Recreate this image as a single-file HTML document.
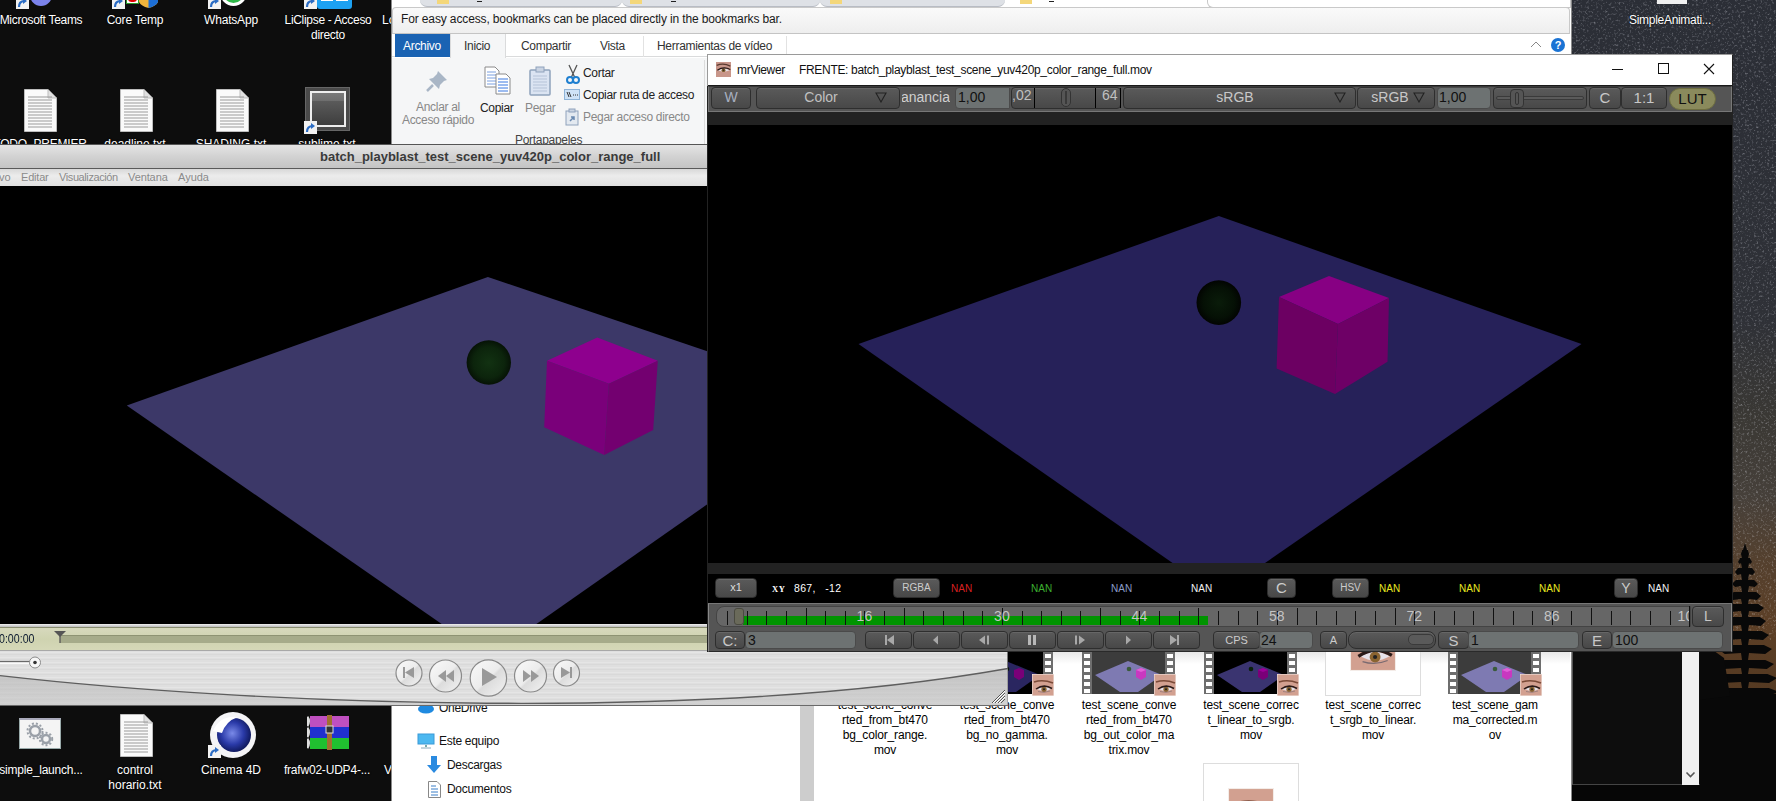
<!DOCTYPE html>
<html><head><meta charset="utf-8">
<style>
*{margin:0;padding:0;box-sizing:border-box}
html,body{width:1776px;height:801px;overflow:hidden;background:#0e0e0e}
body{position:relative;font-family:"Liberation Sans",sans-serif}
.a{position:absolute}
.dt{color:#fff;font-size:12px;text-align:center;line-height:15px;text-shadow:0 0 2px #000}
.rb{font-size:12px;color:#222;letter-spacing:-0.3px;white-space:nowrap}
.mb{position:absolute;border-radius:4px;background:linear-gradient(#5a5a5a,#484848);border:1px solid #2e2e2e;box-shadow:inset 0 1px 0 #666}
.mt{color:#c8c8c8;font-size:14px;text-align:center}
.inp{position:absolute;border-radius:4px;background:#6d7272;border:1px solid #4a4a4a;color:#111;font-size:14px}
.nan{position:absolute;font-size:10px;top:583px}
.tk{position:absolute;width:1px;background:#111}
</style></head><body>


<!-- desktop left icons -->
<div class="a" style="left:0;top:0;width:391px;height:801px;background:#0d0d0d"></div>
<svg class="a" style="left:16px;top:-4px" width="13" height="13" viewBox="0 0 13 13"><rect x="0" y="0" width="13" height="13" fill="#f2f2f2"/><path d="M3 11 Q3 5 9 5" stroke="#2b6cc4" stroke-width="2.2" fill="none"/><path d="M7 2 L11 5 L7 8 Z" fill="#2b6cc4"/></svg>
<div class="a" style="left:30px;top:-16px;width:22px;height:22px;border-radius:11px;background:#7b83eb"></div>
<svg class="a" style="left:112px;top:-4px" width="13" height="13" viewBox="0 0 13 13"><rect x="0" y="0" width="13" height="13" fill="#f2f2f2"/><path d="M3 11 Q3 5 9 5" stroke="#2b6cc4" stroke-width="2.2" fill="none"/><path d="M7 2 L11 5 L7 8 Z" fill="#2b6cc4"/></svg>
<div class="a" style="left:126px;top:-6px;width:13px;height:10px;background:#fff;border:1px solid #2a9a2a"></div>
<div class="a" style="left:128px;top:-5px;width:9px;height:7px;border-radius:4px;background:#e00000"></div>
<svg class="a" style="left:139px;top:0" width="19" height="8" viewBox="0 0 19 8"><path d="M0 0 H19 V2 Q17 6 9.5 8 Q2 6 0 2 Z" fill="#f0b43c"/><path d="M9.5 0 H19 V2 Q17 6 9.5 8 Z" fill="#1c6ed6"/></svg>
<svg class="a" style="left:208px;top:-4px" width="13" height="13" viewBox="0 0 13 13"><rect x="0" y="0" width="13" height="13" fill="#f2f2f2"/><path d="M3 11 Q3 5 9 5" stroke="#2b6cc4" stroke-width="2.2" fill="none"/><path d="M7 2 L11 5 L7 8 Z" fill="#2b6cc4"/></svg>
<div class="a" style="left:220px;top:-22px;width:27px;height:28px;border-radius:14px;border:3px solid #fff;background:#2fb84a"></div>
<svg class="a" style="left:304px;top:-4px" width="13" height="13" viewBox="0 0 13 13"><rect x="0" y="0" width="13" height="13" fill="#f2f2f2"/><path d="M3 11 Q3 5 9 5" stroke="#2b6cc4" stroke-width="2.2" fill="none"/><path d="M7 2 L11 5 L7 8 Z" fill="#2b6cc4"/></svg>
<div class="a" style="left:317px;top:-6px;width:35px;height:15px;border-radius:0 0 3px 3px;background:#1da1f2"></div>
<div class="a" style="left:321px;top:-2px;width:12px;height:3px;background:#fff"></div><div class="a" style="left:336px;top:-2px;width:12px;height:3px;background:#fff"></div>
<div class="a dt" style="left:-9px;top:13px;width:100px;letter-spacing:-0.3px">Microsoft Teams</div>
<div class="a dt" style="left:85px;top:13px;width:100px;letter-spacing:-0.2px">Core Temp</div>
<div class="a dt" style="left:181px;top:13px;width:100px;letter-spacing:-0.2px">WhatsApp</div>
<div class="a dt" style="left:273px;top:13px;width:110px;letter-spacing:-0.3px">LiClipse - Acceso<br>directo</div>
<div class="a dt" style="left:382px;top:13px">Lo</div>
<svg class="a" style="left:24px;top:89px" width="33" height="43" viewBox="0 0 33 43"><path d="M0.5 0.5 H24 L32.5 9 V42.5 H0.5 Z" fill="#fafafa" stroke="#bdbdbd"/><path d="M24 0.5 V9 H32.5" fill="#e0e0e0" stroke="#bdbdbd"/><path d="M4 8h24" stroke="#9a9a9a"/><path d="M4 11h24" stroke="#9a9a9a"/><path d="M4 14h24" stroke="#9a9a9a"/><path d="M4 17h24" stroke="#9a9a9a"/><path d="M4 20h24" stroke="#9a9a9a"/><path d="M4 23h24" stroke="#9a9a9a"/><path d="M4 26h24" stroke="#9a9a9a"/><path d="M4 29h24" stroke="#9a9a9a"/><path d="M4 32h24" stroke="#9a9a9a"/><path d="M4 35h24" stroke="#9a9a9a"/><path d="M4 38h24" stroke="#9a9a9a"/></svg><svg class="a" style="left:120px;top:89px" width="33" height="43" viewBox="0 0 33 43"><path d="M0.5 0.5 H24 L32.5 9 V42.5 H0.5 Z" fill="#fafafa" stroke="#bdbdbd"/><path d="M24 0.5 V9 H32.5" fill="#e0e0e0" stroke="#bdbdbd"/><path d="M4 8h24" stroke="#9a9a9a"/><path d="M4 11h24" stroke="#9a9a9a"/><path d="M4 14h24" stroke="#9a9a9a"/><path d="M4 17h24" stroke="#9a9a9a"/><path d="M4 20h24" stroke="#9a9a9a"/><path d="M4 23h24" stroke="#9a9a9a"/><path d="M4 26h24" stroke="#9a9a9a"/><path d="M4 29h24" stroke="#9a9a9a"/><path d="M4 32h24" stroke="#9a9a9a"/><path d="M4 35h24" stroke="#9a9a9a"/><path d="M4 38h24" stroke="#9a9a9a"/></svg><svg class="a" style="left:216px;top:89px" width="33" height="43" viewBox="0 0 33 43"><path d="M0.5 0.5 H24 L32.5 9 V42.5 H0.5 Z" fill="#fafafa" stroke="#bdbdbd"/><path d="M24 0.5 V9 H32.5" fill="#e0e0e0" stroke="#bdbdbd"/><path d="M4 8h24" stroke="#9a9a9a"/><path d="M4 11h24" stroke="#9a9a9a"/><path d="M4 14h24" stroke="#9a9a9a"/><path d="M4 17h24" stroke="#9a9a9a"/><path d="M4 20h24" stroke="#9a9a9a"/><path d="M4 23h24" stroke="#9a9a9a"/><path d="M4 26h24" stroke="#9a9a9a"/><path d="M4 29h24" stroke="#9a9a9a"/><path d="M4 32h24" stroke="#9a9a9a"/><path d="M4 35h24" stroke="#9a9a9a"/><path d="M4 38h24" stroke="#9a9a9a"/></svg>
<div class="a" style="left:305px;top:87px;width:45px;height:44px;background:#4a4a4a;border:1px solid #666"></div>
<div class="a" style="left:310px;top:91px;width:36px;height:36px;border:2px solid #eee;background:linear-gradient(#7a7a7a 0%,#6e6e6e 25%,#5a5a5a 26%,#3e3e3e 100%)"></div>
<svg class="a" style="left:304px;top:121px" width="13" height="13" viewBox="0 0 13 13"><rect x="0" y="0" width="13" height="13" fill="#f2f2f2"/><path d="M3 11 Q3 5 9 5" stroke="#2b6cc4" stroke-width="2.2" fill="none"/><path d="M7 2 L11 5 L7 8 Z" fill="#2b6cc4"/></svg>
<div class="a dt" style="left:-10px;top:137px;width:100px;letter-spacing:-0.2px">TODO_PREMIER</div>
<div class="a dt" style="left:85px;top:137px;width:100px">deadline.txt</div>
<div class="a dt" style="left:181px;top:137px;width:100px">SHADING.txt</div>
<div class="a dt" style="left:277px;top:137px;width:100px">sublime.txt</div>
<!-- bottom row -->
<div class="a" style="left:19px;top:718px;width:42px;height:31px;background:#f4f4f4;border:1px solid #9aa;border-top:2px solid #aab"></div>
<svg class="a" style="left:26px;top:722px" width="30" height="26" viewBox="0 0 30 26"><g fill="none" stroke="#9aa0a8" stroke-width="2.5"><circle cx="9" cy="9" r="5"/><circle cx="20" cy="17" r="4"/></g><g stroke="#9aa0a8" stroke-width="2" stroke-dasharray="2 2"><circle cx="9" cy="9" r="7.5" fill="none"/><circle cx="20" cy="17" r="6.2" fill="none"/></g></svg>
<svg class="a" style="left:120px;top:714px" width="33" height="43" viewBox="0 0 33 43"><path d="M0.5 0.5 H24 L32.5 9 V42.5 H0.5 Z" fill="#fafafa" stroke="#bdbdbd"/><path d="M24 0.5 V9 H32.5" fill="#e0e0e0" stroke="#bdbdbd"/><path d="M4 8h24" stroke="#9a9a9a"/><path d="M4 11h24" stroke="#9a9a9a"/><path d="M4 14h24" stroke="#9a9a9a"/><path d="M4 17h24" stroke="#9a9a9a"/><path d="M4 20h24" stroke="#9a9a9a"/><path d="M4 23h24" stroke="#9a9a9a"/><path d="M4 26h24" stroke="#9a9a9a"/><path d="M4 29h24" stroke="#9a9a9a"/><path d="M4 32h24" stroke="#9a9a9a"/><path d="M4 35h24" stroke="#9a9a9a"/><path d="M4 38h24" stroke="#9a9a9a"/></svg>
<svg class="a" style="left:208px;top:711px" width="48" height="48" viewBox="0 0 48 48"><defs><radialGradient id="c4" cx="45%" cy="45%" r="55%"><stop offset="0" stop-color="#7a8ae8"/><stop offset="0.6" stop-color="#2a3aa8"/><stop offset="1" stop-color="#101a60"/></radialGradient></defs><circle cx="25" cy="24" r="23" fill="#f4f4f6"/><circle cx="26" cy="24" r="17" fill="url(#c4)"/><path d="M5 20 Q12 4 30 6 Q18 10 14 22 Z" fill="#fff"/></svg>
<svg class="a" style="left:208px;top:745px" width="13" height="13" viewBox="0 0 13 13"><rect x="0" y="0" width="13" height="13" fill="#f2f2f2"/><path d="M3 11 Q3 5 9 5" stroke="#2b6cc4" stroke-width="2.2" fill="none"/><path d="M7 2 L11 5 L7 8 Z" fill="#2b6cc4"/></svg>
<svg class="a" style="left:307px;top:715px" width="43" height="35" viewBox="0 0 43 35"><rect x="3" y="1" width="39" height="11" fill="#c050c0"/><rect x="3" y="12" width="39" height="11" fill="#2030d0"/><rect x="3" y="23" width="39" height="11" fill="#20c030"/><path d="M0 2 Q3 6 0 11 M0 13 Q3 17 0 22 M0 24 Q3 28 0 33" stroke="#ddd" stroke-width="3" fill="none"/><rect x="20" y="0" width="5" height="35" fill="#a07030"/><rect x="19" y="11" width="7" height="7" fill="#333" stroke="#ddd"/></svg>
<div class="a dt" style="left:-9px;top:763px;width:100px;letter-spacing:-0.2px">simple_launch...</div>
<div class="a dt" style="left:85px;top:763px;width:100px">control<br>horario.txt</div>
<div class="a dt" style="left:181px;top:763px;width:100px">Cinema 4D</div>
<div class="a dt" style="left:272px;top:763px;width:110px;letter-spacing:-0.2px">frafw02-UDP4-...</div>
<div class="a dt" style="left:384px;top:763px">V</div>

<!-- desktop right side -->
<div class="a" style="left:1572px;top:0;width:204px;height:801px;background:linear-gradient(180deg,#2b2e36 0%,#2f3137 40%,#3a3834 52%,#46403a 62%,#54402e 70%,#5c3f26 78%,#553a22 86%,#1a120a 91%,#070707 100%)"></div>
<svg class="a" style="left:1572px;top:0" width="204" height="801"><filter id="nz" x="0" y="0" width="100%" height="100%"><feTurbulence type="fractalNoise" baseFrequency="0.45" numOctaves="2" seed="5"/><feColorMatrix type="matrix" values="0 0 0 0 0.85  0 0 0 0 0.87  0 0 0 0 0.95  0 0 0 2.4 -1.3"/></filter><rect width="204" height="640" filter="url(#nz)" opacity="0.4"/></svg>
<svg class="a" style="left:1690px;top:536px" width="86" height="265" viewBox="0 0 86 265"><polygon points="55.0,7.0 57.0,14.0 58.0,14.0 57.8,14.0 59.0,18.0 58.0,19.0 59.0,18.0 58.0,22.0 59.9,22.0 62.0,26.0 60.2,28.0 59.0,27.0 58.0,32.0 62.0,32.0 65.0,36.0 62.5,39.0 59.0,38.0 58.0,44.0 64.1,44.0 68.0,48.0 64.8,51.0 59.0,50.0 58.0,56.0 66.2,56.0 71.0,60.0 67.0,64.0 59.0,63.0 58.0,68.0 68.3,68.0 74.0,72.0 69.2,76.0 59.0,75.0 58.0,81.0 69.7,81.0 76.0,85.0 70.8,90.0 59.0,89.0 58.0,95.0 71.8,95.0 79.0,99.0 73.0,104.0 59.0,103.0 58.0,109.0 73.9,109.0 82.0,113.0 75.2,118.0 59.0,117.0 58.0,124.0 75.3,124.0 84.0,128.0 76.8,133.0 59.0,132.0 58.0,138.0 77.4,138.0 87.0,142.0 79.0,147.0 59.0,146.0 58.0,152.0 78.8,152.0 89.0,156.0 80.5,159.0 59.0,158.0 86.0,158.0 86.0,265.0 10.0,265.0 10.0,158.0 51.0,158.0 29.5,159.0 21.0,156.0 31.2,152.0 52.0,152.0 51.0,146.0 31.0,147.0 23.0,142.0 32.6,138.0 52.0,138.0 51.0,132.0 33.2,133.0 26.0,128.0 34.7,124.0 52.0,124.0 51.0,117.0 34.8,118.0 28.0,113.0 36.1,109.0 52.0,109.0 51.0,103.0 37.0,104.0 31.0,99.0 38.2,95.0 52.0,95.0 51.0,89.0 39.2,90.0 34.0,85.0 40.3,81.0 52.0,81.0 51.0,75.0 40.8,76.0 36.0,72.0 41.7,68.0 52.0,68.0 51.0,63.0 43.0,64.0 39.0,60.0 43.8,56.0 52.0,56.0 51.0,50.0 45.2,51.0 42.0,48.0 45.9,44.0 52.0,44.0 51.0,38.0 47.5,39.0 45.0,36.0 48.0,32.0 52.0,32.0 51.0,27.0 49.8,28.0 48.0,26.0 50.1,22.0 52.0,22.0 51.0,18.0 52.0,19.0 51.0,18.0 52.2,14.0 52.0,14.0 53.0,14.0" fill="#080808"/><polygon points="0,118 20,112 34,122 40,160 0,165" fill="#090909"/></svg>
<div class="a dt" style="left:1620px;top:13px;width:100px;letter-spacing:-0.3px">SimpleAnimati...</div>
<div class="a" style="left:1657px;top:0;width:30px;height:4px;background:#f0f0f0"></div>



<!-- Explorer window -->
<div class="a" style="left:391px;top:0;width:1181px;height:801px;background:#fff;border-left:1px solid #8a8a8a;border-right:1px solid #8a8a8a"></div>
<!-- top tab strip -->
<div class="a" style="left:392px;top:0;width:1179px;height:8px;background:#fff"></div>
<div class="a" style="left:420px;top:0;width:202px;height:7px;background:#dee1e6;border-radius:0 0 8px 8px;border-bottom:1px solid #b8bcc4"></div>
<div class="a" style="left:622px;top:0;width:198px;height:7px;background:#dee1e6;border-radius:0 0 8px 8px;border-bottom:1px solid #b8bcc4"></div>
<div class="a" style="left:820px;top:0;width:185px;height:7px;background:#dee1e6;border-radius:0 0 8px 8px;border-bottom:1px solid #b8bcc4"></div>
<div class="a" style="left:437px;top:0;width:12px;height:4px;background:#f4d77a"></div>
<div class="a" style="left:477px;top:1px;width:5px;height:1px;background:#222"></div><div class="a" style="left:671px;top:1px;width:5px;height:1px;background:#222"></div>
<div class="a" style="left:630px;top:0;width:12px;height:4px;background:#f4d77a"></div>
<div class="a" style="left:830px;top:0;width:12px;height:4px;background:#f4d77a"></div>
<div class="a" style="left:1020px;top:0;width:12px;height:4px;background:#f4d77a"></div>
<div class="a" style="left:1049px;top:1px;width:5px;height:1px;background:#222"></div>
<div class="a" style="left:1207px;top:0;width:364px;height:8px;border:1px solid #c8c8c8;border-top:none;border-radius:0 0 0 6px;background:#fff"></div>
<!-- bookmark popup -->
<div class="a" style="left:392px;top:7px;width:1178px;height:27px;background:linear-gradient(#fafafa,#eeeeee);border:1px solid #c9c9c9;border-bottom:1px solid #c4c4c4;border-radius:4px 4px 0 0"></div>
<div class="a rb" style="left:401px;top:12px;font-size:12px;color:#1a1a1a;letter-spacing:-0.13px">For easy access, bookmarks can be placed directly in the bookmarks bar.</div>
<!-- ribbon tabs -->
<div class="a" style="left:392px;top:34px;width:1178px;height:23px;background:#fff;border-bottom:1px solid #dadbdc"></div>
<div class="a" style="left:395px;top:34px;width:55px;height:23px;background:#1a63b3"></div>
<div class="a rb" style="left:403px;top:39px;color:#fff">Archivo</div>
<div class="a" style="left:450px;top:34px;width:56px;height:24px;background:#f5f6f7;border-left:1px solid #dadbdc;border-right:1px solid #dadbdc"></div>
<div class="a rb" style="left:464px;top:39px;color:#333">Inicio</div>
<div class="a rb" style="left:521px;top:39px;color:#333">Compartir</div>
<div class="a rb" style="left:600px;top:39px;color:#333">Vista</div>
<div class="a" style="left:643px;top:36px;width:1px;height:21px;background:#e2e2e2"></div>
<div class="a rb" style="left:657px;top:39px;color:#333">Herramientas de vídeo</div>
<div class="a" style="left:786px;top:36px;width:1px;height:21px;background:#e2e2e2"></div>
<!-- ribbon body -->
<div class="a" style="left:392px;top:58px;width:1178px;height:87px;background:#f5f6f7"></div>
<div class="a" style="left:704px;top:60px;width:1px;height:84px;background:#dcdcdc"></div>
<!-- ribbon icons -->
<svg class="a" style="left:424px;top:68px" width="26" height="26" viewBox="0 0 26 26"><path d="M14 3 L23 12 L20 13 L16 17 L15 21 L5 11 L9 10 L13 6 Z" fill="#a9b6c6"/><path d="M9 17 L3 23" stroke="#a9b6c6" stroke-width="2.5"/></svg>
<div class="a rb" style="left:397px;top:101px;width:82px;text-align:center;line-height:13px;color:#888">Anclar al<br>Acceso rápido</div>
<svg class="a" style="left:484px;top:66px" width="28" height="30" viewBox="0 0 28 30"><path d="M1 1 H11 L15 5 V21 H1 Z" fill="#fff" stroke="#8a8a8a"/><path d="M3 6h9M3 9h9M3 12h9M3 15h9M3 18h9" stroke="#7aa0e0"/><path d="M12 8 H22 L26 12 V28 H12 Z" fill="#fff" stroke="#8a8a8a"/><path d="M14 13h10M14 16h10M14 19h10M14 22h10M14 25h10" stroke="#3a78e0"/></svg>
<div class="a rb" style="left:480px;top:101px;color:#222">Copiar</div>
<svg class="a" style="left:528px;top:66px" width="24" height="30" viewBox="0 0 24 30"><rect x="2" y="4" width="20" height="25" rx="1" fill="#dbe4f2" stroke="#8fa2bc" stroke-width="1.5"/><rect x="8" y="1" width="8" height="5" fill="#c9d3e2" stroke="#8fa2bc"/><path d="M5 10h14M5 13h14M5 16h14M5 19h14M5 22h14M5 25h14" stroke="#b5c3d8"/></svg>
<div class="a rb" style="left:525px;top:101px;color:#888">Pegar</div>
<svg class="a" style="left:565px;top:64px" width="16" height="20" viewBox="0 0 16 20"><path d="M4 1 L10 14 M12 1 L6 14" stroke="#555" stroke-width="1.3"/><circle cx="5" cy="16" r="3" fill="none" stroke="#1e7fd0" stroke-width="2"/><circle cx="11" cy="16" r="3" fill="none" stroke="#1e7fd0" stroke-width="2"/></svg>
<div class="a rb" style="left:583px;top:66px;color:#222">Cortar</div>
<svg class="a" style="left:564px;top:89px" width="16" height="11" viewBox="0 0 16 11"><rect x="0.5" y="0.5" width="15" height="10" fill="#cfe3f7" stroke="#8fb4d8"/><path d="M3 3 L5 8 M5 3 L7 8 M9 6h1M11 6h1M13 6h1" stroke="#333"/></svg>
<div class="a rb" style="left:583px;top:88px;color:#222">Copiar ruta de acceso</div>
<svg class="a" style="left:565px;top:108px" width="14" height="18" viewBox="0 0 14 18"><rect x="1" y="3" width="12" height="14" fill="#e3e9f0" stroke="#8fa2bc"/><rect x="4" y="1" width="6" height="3" fill="#c9d3e2" stroke="#8fa2bc"/><path d="M5 13 L9 9 M6 9h3v3" stroke="#6a89b0" stroke-width="1.5" fill="none"/></svg>
<div class="a rb" style="left:583px;top:110px;color:#888">Pegar acceso directo</div>
<div class="a rb" style="left:515px;top:133px;color:#444">Portapapeles</div>
<!-- ribbon right controls -->
<svg class="a" style="left:1530px;top:40px" width="12" height="8" viewBox="0 0 12 8"><path d="M1 7 L6 2 L11 7" stroke="#888" fill="none"/></svg>
<div class="a" style="left:1551px;top:38px;width:14px;height:14px;border-radius:7px;background:#1a73d4;color:#fff;font-size:11px;font-weight:bold;text-align:center;line-height:14px">?</div>
<!-- nav pane -->
<div class="a" style="left:800px;top:700px;width:14px;height:101px;background:#cdcdcd"></div>
<svg class="a" style="left:418px;top:700px" width="16" height="14" viewBox="0 0 16 14"><ellipse cx="8" cy="9" rx="8" ry="4.5" fill="#1f8ae0"/><circle cx="6" cy="6" r="4" fill="#1f8ae0"/><circle cx="11" cy="7" r="3.5" fill="#1f8ae0"/></svg>
<div class="a rb" style="left:439px;top:701px;color:#111">OneDrive</div>
<svg class="a" style="left:417px;top:733px" width="18" height="16" viewBox="0 0 18 16"><rect x="1" y="1" width="16" height="10" fill="#4cb8f0" stroke="#3a9ad8"/><path d="M8 12h2v2H8z" fill="#7aa"/><path d="M4 15 H14" stroke="#8ab"/></svg>
<div class="a rb" style="left:439px;top:734px;color:#111">Este equipo</div>
<svg class="a" style="left:426px;top:756px" width="16" height="18" viewBox="0 0 16 18"><path d="M5 0 H11 V9 H15 L8 17 L1 9 H5 Z" fill="#2a8ae0"/></svg>
<div class="a rb" style="left:447px;top:758px;color:#111">Descargas</div>
<svg class="a" style="left:428px;top:781px" width="13" height="17" viewBox="0 0 13 17"><path d="M0.5 0.5 H9 L12.5 4 V16.5 H0.5 Z" fill="#fff" stroke="#888"/><path d="M3 5h5M3 8h7M3 11h7M3 14h7" stroke="#3a7ec8"/></svg>
<div class="a rb" style="left:447px;top:782px;color:#111">Documentos</div>



<!-- file area -->
<div class="a" style="left:814px;top:652px;width:756px;height:12px;background:linear-gradient(#e8e8e8,#fff)"></div>
<svg class="a" id="t2" style="left:970px;top:652px" width="73" height="42" viewBox="0 0 73 42" preserveAspectRatio="none"><rect width="73" height="42" fill="#000"/><polygon points="36,9 70,23 46,40 28,40 3,23" fill="#2a2660"/><circle cx="37" cy="17" r="2.3" fill="#0a1a0a"/><polygon points="44,18 49,16 54,18 54,25 49,28 44,25" fill="#7a0078"/></svg><div class="a" style="left:1043px;top:652px;width:10px;height:42px;background:#6e6e6e"></div><div class="a" style="left:1045px;top:654px;width:6px;height:4px;background:#fff"></div><div class="a" style="left:1045px;top:661px;width:6px;height:4px;background:#fff"></div><div class="a" style="left:1045px;top:668px;width:6px;height:4px;background:#fff"></div><div class="a" style="left:1045px;top:675px;width:6px;height:4px;background:#fff"></div><div class="a" style="left:1045px;top:682px;width:6px;height:4px;background:#fff"></div><div class="a" style="left:1045px;top:689px;width:6px;height:4px;background:#fff"></div><svg class="a" style="left:1032px;top:674px" width="22" height="22" viewBox="0 0 22 22" preserveAspectRatio="none"><rect width="22" height="22" fill="#d2a090" stroke="#f4ece8" stroke-width="1"/><path d="M2 8 Q11 5 21 9" stroke="#7a4a38" stroke-width="1.6" fill="none"/><path d="M5 15 Q12 10.5 19 15 Q12 19 5 15 Z" fill="#e6e2ea"/><circle cx="12" cy="15.3" r="2.6" fill="#8a6430"/><circle cx="12" cy="15.3" r="1" fill="#222"/><path d="M4 15 Q12 9.5 20 14.5" stroke="#2a1a18" stroke-width="1.5" fill="none"/><path d="M6 17.5 Q12 19.5 18 17" stroke="#7a6a70" stroke-width="0.6" fill="none"/></svg><div class="a" style="left:1082px;top:652px;width:10px;height:42px;background:#6e6e6e"></div><div class="a" style="left:1084px;top:654px;width:6px;height:4px;background:#fff"></div><div class="a" style="left:1084px;top:661px;width:6px;height:4px;background:#fff"></div><div class="a" style="left:1084px;top:668px;width:6px;height:4px;background:#fff"></div><div class="a" style="left:1084px;top:675px;width:6px;height:4px;background:#fff"></div><div class="a" style="left:1084px;top:682px;width:6px;height:4px;background:#fff"></div><div class="a" style="left:1084px;top:689px;width:6px;height:4px;background:#fff"></div><svg class="a" style="left:1092px;top:652px" width="73" height="42" viewBox="0 0 73 42" preserveAspectRatio="none"><rect width="73" height="42" fill="#3c3c3c"/><polygon points="36,9 70,23 46,40 28,40 3,23" fill="#7e7ab2"/><circle cx="37" cy="17" r="2.3" fill="#3a5a3a"/><polygon points="44,18 49,16 54,18 54,25 49,28 44,25" fill="#c838c0"/><polygon points="44,18 49,16 54,18 49,20" fill="#e060d8"/></svg><div class="a" style="left:1165px;top:652px;width:10px;height:42px;background:#6e6e6e"></div><div class="a" style="left:1167px;top:654px;width:6px;height:4px;background:#fff"></div><div class="a" style="left:1167px;top:661px;width:6px;height:4px;background:#fff"></div><div class="a" style="left:1167px;top:668px;width:6px;height:4px;background:#fff"></div><div class="a" style="left:1167px;top:675px;width:6px;height:4px;background:#fff"></div><div class="a" style="left:1167px;top:682px;width:6px;height:4px;background:#fff"></div><div class="a" style="left:1167px;top:689px;width:6px;height:4px;background:#fff"></div><svg class="a" style="left:1154px;top:674px" width="22" height="22" viewBox="0 0 22 22" preserveAspectRatio="none"><rect width="22" height="22" fill="#d2a090" stroke="#f4ece8" stroke-width="1"/><path d="M2 8 Q11 5 21 9" stroke="#7a4a38" stroke-width="1.6" fill="none"/><path d="M5 15 Q12 10.5 19 15 Q12 19 5 15 Z" fill="#e6e2ea"/><circle cx="12" cy="15.3" r="2.6" fill="#8a6430"/><circle cx="12" cy="15.3" r="1" fill="#222"/><path d="M4 15 Q12 9.5 20 14.5" stroke="#2a1a18" stroke-width="1.5" fill="none"/><path d="M6 17.5 Q12 19.5 18 17" stroke="#7a6a70" stroke-width="0.6" fill="none"/></svg><div class="a" style="left:1204px;top:652px;width:10px;height:42px;background:#6e6e6e"></div><div class="a" style="left:1206px;top:654px;width:6px;height:4px;background:#fff"></div><div class="a" style="left:1206px;top:661px;width:6px;height:4px;background:#fff"></div><div class="a" style="left:1206px;top:668px;width:6px;height:4px;background:#fff"></div><div class="a" style="left:1206px;top:675px;width:6px;height:4px;background:#fff"></div><div class="a" style="left:1206px;top:682px;width:6px;height:4px;background:#fff"></div><div class="a" style="left:1206px;top:689px;width:6px;height:4px;background:#fff"></div><svg class="a" style="left:1214px;top:652px" width="73" height="42" viewBox="0 0 73 42" preserveAspectRatio="none"><rect width="73" height="42" fill="#000"/><polygon points="36,9 70,23 46,40 28,40 3,23" fill="#3a3470"/><circle cx="37" cy="17" r="2.3" fill="#0a200a"/><polygon points="44,18 49,16 54,18 54,25 49,28 44,25" fill="#7a0078"/><polygon points="44,18 49,16 54,18 49,20" fill="#9a0098"/></svg><div class="a" style="left:1287px;top:652px;width:10px;height:42px;background:#6e6e6e"></div><div class="a" style="left:1289px;top:654px;width:6px;height:4px;background:#fff"></div><div class="a" style="left:1289px;top:661px;width:6px;height:4px;background:#fff"></div><div class="a" style="left:1289px;top:668px;width:6px;height:4px;background:#fff"></div><div class="a" style="left:1289px;top:675px;width:6px;height:4px;background:#fff"></div><div class="a" style="left:1289px;top:682px;width:6px;height:4px;background:#fff"></div><div class="a" style="left:1289px;top:689px;width:6px;height:4px;background:#fff"></div><svg class="a" style="left:1277px;top:674px" width="22" height="22" viewBox="0 0 22 22" preserveAspectRatio="none"><rect width="22" height="22" fill="#d2a090" stroke="#f4ece8" stroke-width="1"/><path d="M2 8 Q11 5 21 9" stroke="#7a4a38" stroke-width="1.6" fill="none"/><path d="M5 15 Q12 10.5 19 15 Q12 19 5 15 Z" fill="#e6e2ea"/><circle cx="12" cy="15.3" r="2.6" fill="#8a6430"/><circle cx="12" cy="15.3" r="1" fill="#222"/><path d="M4 15 Q12 9.5 20 14.5" stroke="#2a1a18" stroke-width="1.5" fill="none"/><path d="M6 17.5 Q12 19.5 18 17" stroke="#7a6a70" stroke-width="0.6" fill="none"/></svg><div class="a" style="left:1325px;top:648px;width:96px;height:48px;background:#fff;border:1px solid #ddd;border-top:none"></div><svg class="a" style="left:1350px;top:648px" width="46" height="23" viewBox="0 11 22 11" preserveAspectRatio="none"><rect width="22" height="22" fill="#d2a090" stroke="#f4ece8" stroke-width="1"/><path d="M2 8 Q11 5 21 9" stroke="#7a4a38" stroke-width="1.6" fill="none"/><path d="M5 15 Q12 10.5 19 15 Q12 19 5 15 Z" fill="#e6e2ea"/><circle cx="12" cy="15.3" r="2.6" fill="#8a6430"/><circle cx="12" cy="15.3" r="1" fill="#222"/><path d="M4 15 Q12 9.5 20 14.5" stroke="#2a1a18" stroke-width="1.5" fill="none"/><path d="M6 17.5 Q12 19.5 18 17" stroke="#7a6a70" stroke-width="0.6" fill="none"/></svg><div class="a" style="left:1448px;top:652px;width:10px;height:42px;background:#6e6e6e"></div><div class="a" style="left:1450px;top:654px;width:6px;height:4px;background:#fff"></div><div class="a" style="left:1450px;top:661px;width:6px;height:4px;background:#fff"></div><div class="a" style="left:1450px;top:668px;width:6px;height:4px;background:#fff"></div><div class="a" style="left:1450px;top:675px;width:6px;height:4px;background:#fff"></div><div class="a" style="left:1450px;top:682px;width:6px;height:4px;background:#fff"></div><div class="a" style="left:1450px;top:689px;width:6px;height:4px;background:#fff"></div><svg class="a" style="left:1458px;top:652px" width="73" height="42" viewBox="0 0 73 42" preserveAspectRatio="none"><rect width="73" height="42" fill="#3c3c3c"/><polygon points="36,9 70,23 46,40 28,40 3,23" fill="#7e7ab2"/><circle cx="37" cy="17" r="2.3" fill="#3a5a3a"/><polygon points="44,18 49,16 54,18 54,25 49,28 44,25" fill="#c838c0"/><polygon points="44,18 49,16 54,18 49,20" fill="#e060d8"/></svg><div class="a" style="left:1531px;top:652px;width:10px;height:42px;background:#6e6e6e"></div><div class="a" style="left:1533px;top:654px;width:6px;height:4px;background:#fff"></div><div class="a" style="left:1533px;top:661px;width:6px;height:4px;background:#fff"></div><div class="a" style="left:1533px;top:668px;width:6px;height:4px;background:#fff"></div><div class="a" style="left:1533px;top:675px;width:6px;height:4px;background:#fff"></div><div class="a" style="left:1533px;top:682px;width:6px;height:4px;background:#fff"></div><div class="a" style="left:1533px;top:689px;width:6px;height:4px;background:#fff"></div><svg class="a" style="left:1520px;top:674px" width="22" height="22" viewBox="0 0 22 22" preserveAspectRatio="none"><rect width="22" height="22" fill="#d2a090" stroke="#f4ece8" stroke-width="1"/><path d="M2 8 Q11 5 21 9" stroke="#7a4a38" stroke-width="1.6" fill="none"/><path d="M5 15 Q12 10.5 19 15 Q12 19 5 15 Z" fill="#e6e2ea"/><circle cx="12" cy="15.3" r="2.6" fill="#8a6430"/><circle cx="12" cy="15.3" r="1" fill="#222"/><path d="M4 15 Q12 9.5 20 14.5" stroke="#2a1a18" stroke-width="1.5" fill="none"/><path d="M6 17.5 Q12 19.5 18 17" stroke="#7a6a70" stroke-width="0.6" fill="none"/></svg><div class="a" style="left:1203px;top:763px;width:96px;height:40px;background:#fff;border:1px solid #ddd"></div><svg class="a" style="left:1228px;top:788px" width="46" height="23" viewBox="0 0 22 11" preserveAspectRatio="none"><rect width="22" height="22" fill="#d2a090" stroke="#f4ece8" stroke-width="1"/><path d="M2 8 Q11 5 21 9" stroke="#7a4a38" stroke-width="1.6" fill="none"/><path d="M5 15 Q12 10.5 19 15 Q12 19 5 15 Z" fill="#e6e2ea"/><circle cx="12" cy="15.3" r="2.6" fill="#8a6430"/><circle cx="12" cy="15.3" r="1" fill="#222"/><path d="M4 15 Q12 9.5 20 14.5" stroke="#2a1a18" stroke-width="1.5" fill="none"/><path d="M6 17.5 Q12 19.5 18 17" stroke="#7a6a70" stroke-width="0.6" fill="none"/></svg><div class="a" style="left:825px;top:698px;width:120px;text-align:center;font-size:12px;line-height:15px;color:#000;letter-spacing:-0.15px">test_scene_conve<br>rted_from_bt470<br>bg_color_range.<br>mov</div><div class="a" style="left:947px;top:698px;width:120px;text-align:center;font-size:12px;line-height:15px;color:#000;letter-spacing:-0.15px">test_scene_conve<br>rted_from_bt470<br>bg_no_gamma.<br>mov</div><div class="a" style="left:1069px;top:698px;width:120px;text-align:center;font-size:12px;line-height:15px;color:#000;letter-spacing:-0.15px">test_scene_conve<br>rted_from_bt470<br>bg_out_color_ma<br>trix.mov</div><div class="a" style="left:1191px;top:698px;width:120px;text-align:center;font-size:12px;line-height:15px;color:#000;letter-spacing:-0.15px">test_scene_correc<br>t_linear_to_srgb.<br>mov</div><div class="a" style="left:1313px;top:698px;width:120px;text-align:center;font-size:12px;line-height:15px;color:#000;letter-spacing:-0.15px">test_scene_correc<br>t_srgb_to_linear.<br>mov</div><div class="a" style="left:1435px;top:698px;width:120px;text-align:center;font-size:12px;line-height:15px;color:#000;letter-spacing:-0.15px">test_scene_gam<br>ma_corrected.m<br>ov</div><!-- dark preview pane -->
<div class="a" style="left:1572px;top:785px;width:128px;height:16px;background:#060606"></div>
<div class="a" style="left:1572px;top:650px;width:128px;height:135px;background:#0d0d0d;border-left:1px solid #555;border-bottom:1px solid #444"></div>
<div class="a" style="left:1682px;top:650px;width:17px;height:135px;background:#f0f0f0"></div><svg class="a" style="left:1685px;top:771px" width="11" height="8" viewBox="0 0 11 8"><path d="M1.5 1.5 L5.5 5.5 L9.5 1.5" stroke="#555" stroke-width="1.6" fill="none"/></svg>


<!-- Left player -->
<div class="a" style="left:0;top:144px;width:708px;height:1px;background:#555"></div>
<div class="a" style="left:0;top:145px;width:708px;height:23px;background:linear-gradient(#e4e4e4,#d2d2d2 50%,#c4c4c4)"></div>
<div class="a" style="left:0;top:168px;width:708px;height:1px;background:#5a5a5a"></div>
<div class="a" style="left:320px;top:149px;font-size:13px;font-weight:bold;color:#3a3a3a;white-space:nowrap;letter-spacing:0px">batch_playblast_test_scene_yuv420p_color_range_full</div>
<div class="a" style="left:0;top:169px;width:708px;height:17px;background:linear-gradient(#d8d8d8,#ececec 40%,#e0e0e0)"></div>
<div class="a" style="left:-1px;top:171px;font-size:11px;color:#8a8a8a;white-space:nowrap">vo</div><div class="a" style="left:21px;top:171px;font-size:11px;color:#8a8a8a;letter-spacing:-0.2px">Editar</div><div class="a" style="left:59px;top:171px;font-size:11px;color:#8a8a8a;letter-spacing:-0.4px">Visualización</div><div class="a" style="left:128px;top:171px;font-size:11px;color:#8a8a8a;letter-spacing:-0.1px">Ventana</div><div class="a" style="left:178px;top:171px;font-size:11px;color:#8a8a8a">Ayuda</div>
<div class="a" style="left:0;top:186px;width:708px;height:438px;background:#000;overflow:hidden">
<svg width="708" height="438" viewBox="0 186 708 438">
<polygon points="487.9,277 760,369.2 760,467.4 536.4,624 441.7,624 126.8,405.5" fill="#3c3868"/>
<defs><radialGradient id="sp1"><stop offset="0" stop-color="#123212"/><stop offset="0.7" stop-color="#0c240c"/><stop offset="1" stop-color="#061206"/></radialGradient></defs><circle cx="488.8" cy="362.5" r="22.2" fill="url(#sp1)"/>
<polygon points="547,360.7 597.3,337.6 657.8,360.7 608.9,383.8" fill="#8e008e"/>
<polygon points="547,360.7 608.9,383.8 604.2,454.9 544.2,427.2" fill="#7a007a"/>
<polygon points="608.9,383.8 657.8,360.7 653.2,429.9 604.2,454.9" fill="#730070"/>
</svg></div>
<div class="a" style="left:0;top:624px;width:708px;height:3px;background:linear-gradient(#f0f0f0,#bbb)"></div>
<div class="a" style="left:0;top:627px;width:708px;height:23px;background:linear-gradient(#d7d9bd,#cfd3b0 50%,#d5d8b8);border-top:1px solid #8a8e70"></div>
<div class="a" style="left:60px;top:635px;width:648px;height:8px;background:#a6ab8a;border-top:1px solid #8e9373"></div>
<svg class="a" style="left:53px;top:630px" width="14" height="13" viewBox="0 0 14 13"><path d="M1 1 H13 L7 7 Z" fill="#555"/><path d="M7 6 V13" stroke="#555" stroke-width="1.3"/></svg>
<div class="a" style="left:-1px;top:632px;font-size:12.5px;color:#0c1a30;white-space:nowrap;transform:scaleX(0.85);transform-origin:0 0">0:00:00</div>
<div class="a" style="left:0;top:650px;width:1008px;height:56px;background:repeating-linear-gradient(180deg,#dcdcdc 0px,#e8e8e8 2px,#d6d6d6 3px,#e2e2e2 5px);border-top:1px solid #a8a8a8;border-bottom:1px solid #6a6a6a;border-right:1px solid #777"></div>
<svg class="a" style="left:0;top:650px" width="1008" height="56" viewBox="0 650 1008 56">
<defs><linearGradient id="shd" x1="0" y1="0" x2="0" y2="1"><stop offset="0" stop-color="#b0b0b0"/><stop offset="1" stop-color="#c8c8c8"/></linearGradient></defs>
<path d="M0 675.6 C 257 704.9, 704.6 722.3, 1008 668.5 L1008 705 L0 705 Z" fill="url(#shd)" opacity="0.6"/>
<path d="M0 675.6 C 257 704.9, 704.6 722.3, 1008 668.5" stroke="#5e5e5e" stroke-width="1.4" fill="none"/>
<path d="M0 661.5 H30" stroke="#6a6a6a" stroke-width="1.2"/><path d="M0 663.5 H30" stroke="#fafafa" stroke-width="1.6"/>
<circle cx="35" cy="662.5" r="5.5" fill="#f6f6f6" stroke="#8a8a8a"/><circle cx="35" cy="662.5" r="1.8" fill="#333"/>
<defs><linearGradient id="bg1" x1="0" y1="0" x2="1" y2="1"><stop offset="0" stop-color="#fafafa"/><stop offset="0.5" stop-color="#ececec"/><stop offset="0.55" stop-color="#dcdcdc"/><stop offset="1" stop-color="#f4f4f4"/></linearGradient></defs><g fill="url(#bg1)" stroke="#8a8a8a" stroke-width="1.2">
<circle cx="409" cy="673" r="13"/><circle cx="445.5" cy="676" r="16"/><circle cx="488.4" cy="678" r="18.2"/><circle cx="530.5" cy="676" r="16"/><circle cx="566.5" cy="673" r="13"/>
</g>
<g fill="#999">
<rect x="403" y="667" width="2" height="11"/><path d="M405 672.5 L414 667 V678 Z"/>
<path d="M438 676 L446 670 V682 Z"/><path d="M446 676 L454 670 V682 Z"/>
<path d="M482 668 L497 677 L482 686 Z"/>
<path d="M523 670 L531 676 L523 682 Z"/><path d="M531 670 L539 676 L531 682 Z"/>
<path d="M561 667 L570 672.5 L561 678 Z"/><rect x="570" y="667" width="2" height="11"/>
</g>
<g stroke="#555" stroke-width="1"><path d="M992 703 L1005 690"/><path d="M995 703 L1005 693"/><path d="M998 703 L1005 696"/><path d="M1001 703 L1005 699"/></g>
<g stroke="#fff" stroke-width="1"><path d="M993 703 L1005 691"/><path d="M996 703 L1005 694"/><path d="M999 703 L1005 697"/></g>
</svg>



<!-- mrViewer -->
<div class="a" style="left:707px;top:54px;width:1026px;height:598px;background:#000;border:1px solid #222;border-top-color:#9a9a9a"></div><div class="a" style="left:707px;top:54px;width:1px;height:32px;background:#9a9a9a"></div>
<div class="a" style="left:708px;top:55px;width:1024px;height:30px;background:#fff"></div>
<svg class="a" style="left:716px;top:62px" width="15" height="15" viewBox="0 0 22 22" preserveAspectRatio="none"><rect width="22" height="22" fill="#c8968a"/><path d="M1 5 Q11 1 21 6" stroke="#5a3a30" stroke-width="1.8" fill="none"/><path d="M3 12 Q11 7 20 12 Q11 16 3 12 Z" fill="#e8e4ea"/><circle cx="11" cy="12" r="2.8" fill="#7a5a28"/><circle cx="11" cy="12" r="1" fill="#222"/><path d="M2 12 Q11 6 21 11" stroke="#221414" stroke-width="1.8" fill="none"/></svg>
<div class="a" style="left:737px;top:63px;font-size:12px;color:#111;white-space:nowrap;letter-spacing:-0.3px">mrViewer</div><div class="a" style="left:799px;top:63px;font-size:12px;color:#111;white-space:nowrap;letter-spacing:-0.32px">FRENTE: batch_playblast_test_scene_yuv420p_color_range_full.mov</div>
<svg class="a" style="left:1610px;top:62px" width="110" height="14" viewBox="0 0 110 14"><path d="M2 7.5 H13" stroke="#111"/><rect x="48.5" y="1.5" width="10" height="10" fill="none" stroke="#111"/><path d="M94 2 L104 12 M104 2 L94 12" stroke="#111" stroke-width="1.1"/></svg>
<!-- toolbar -->
<div class="a" style="left:708px;top:85px;width:1024px;height:1px;background:#1a1a1a"></div>
<div class="a" style="left:708px;top:86px;width:1024px;height:26px;background:#555;border:1px solid #777;border-top:1px solid #3a3a3a"></div>
<div class="a" style="left:708px;top:112px;width:1024px;height:13px;background:#222"></div>
<div class="mb" style="left:711px;top:87px;width:40px;height:22px"></div><div class="a mt" style="left:711px;top:89px;width:40px;color:#a8b0c0">W</div>
<div class="mb" style="left:756px;top:87px;width:144px;height:22px"></div><div class="a mt" style="left:790px;top:89px;width:62px;color:#c0c0c0">Color</div>
<svg class="a" style="left:875px;top:92px" width="12" height="11" viewBox="0 0 12 11"><path d="M1 1 H11 L6 10 Z" fill="none" stroke="#222" stroke-width="1.1"/></svg>
<div class="a" style="left:902px;top:89px;width:48px;overflow:hidden;white-space:nowrap;font-size:14px;color:#d0d0d0;direction:rtl">Ganancia</div>
<div class="inp" style="left:955px;top:87px;width:55px;height:22px;border-radius:4px 0 0 4px"></div><div class="a" style="left:958px;top:89px;font-size:14px;color:#111">1,00</div>
<div class="mb" style="left:1011px;top:87px;width:110px;height:22px"></div>
<div class="a" style="left:1012px;top:87px;font-size:14px;color:#c0c0c0">,02</div>
<div class="tk" style="left:1034px;top:88px;height:20px;background:#000"></div>
<div class="a" style="left:1061px;top:88px;width:10px;height:19px;border:1px solid #333;border-radius:5px;background:#555"></div>
<div class="a" style="left:1065px;top:91px;width:2px;height:13px;border:1px solid #3a3a3a"></div>
<div class="tk" style="left:1095px;top:88px;height:20px;background:#000"></div>
<div class="a" style="left:1102px;top:87px;font-size:14px;color:#c0c0c0">64</div>
<div class="tk" style="left:1120px;top:88px;height:20px;background:#000"></div>
<div class="mb" style="left:1123px;top:87px;width:233px;height:22px"></div><div class="a mt" style="left:1200px;top:89px;width:70px">sRGB</div>
<svg class="a" style="left:1334px;top:92px" width="12" height="11" viewBox="0 0 12 11"><path d="M1 1 H11 L6 10 Z" fill="none" stroke="#222" stroke-width="1.1"/></svg>
<div class="mb" style="left:1357px;top:87px;width:78px;height:22px"></div><div class="a mt" style="left:1370px;top:89px;width:40px">sRGB</div>
<svg class="a" style="left:1413px;top:92px" width="12" height="11" viewBox="0 0 12 11"><path d="M1 1 H11 L6 10 Z" fill="none" stroke="#222" stroke-width="1.1"/></svg>
<div class="inp" style="left:1437px;top:87px;width:54px;height:22px"></div><div class="a" style="left:1439px;top:89px;font-size:14px;color:#111">1,00</div>
<div class="mb" style="left:1493px;top:87px;width:94px;height:22px"></div>
<div class="a" style="left:1496px;top:96px;width:88px;height:4px;border:1px solid #3a3a3a;border-radius:2px;background:#5a5a5a"></div>
<div class="a" style="left:1510px;top:89px;width:14px;height:19px;border:1px solid #333;border-radius:4px;background:#555"></div>
<div class="a" style="left:1515px;top:92px;width:4px;height:13px;border:1px solid #333;border-radius:2px"></div>
<div class="mb" style="left:1589px;top:87px;width:32px;height:22px"></div><div class="a mt" style="left:1589px;top:89px;width:32px;font-size:15px">C</div>
<div class="mb" style="left:1621px;top:87px;width:46px;height:22px"></div><div class="a mt" style="left:1621px;top:89px;width:46px;font-size:15px">1:1</div>
<div class="a" style="left:1669px;top:88px;width:47px;height:22px;border-radius:11px;background:#8a8a5c;border:1px solid #6e6e40"></div><div class="a" style="left:1669px;top:90px;width:47px;text-align:center;font-size:15px;color:#111">LUT</div>
<!-- view -->
<svg class="a" style="left:708px;top:125px" width="1024" height="438" viewBox="708 125 1024 438">
<polygon points="1218.8,216 1581.5,344 1265,563 1172.6,563 858.5,344" fill="#262159"/>
<defs><radialGradient id="sp2"><stop offset="0" stop-color="#0a1c0a"/><stop offset="0.7" stop-color="#051005"/><stop offset="1" stop-color="#020402"/></radialGradient></defs><circle cx="1218.8" cy="302.6" r="22.3" fill="url(#sp2)"/>
<polygon points="1279,297 1329,276 1389,298 1338,324" fill="#870083"/>
<polygon points="1279,297 1338,324 1335,394 1276.6,368.6" fill="#6c0062"/>
<polygon points="1338,324 1389,298 1387.5,361.7 1335,394" fill="#6e0066"/>
</svg>
<div class="a" style="left:708px;top:563px;width:1024px;height:11px;background:#222"></div>
<!-- info bar -->
<div class="mb" style="left:715px;top:578px;width:42px;height:20px"></div><div class="a" style="left:715px;top:581px;width:42px;text-align:center;font-size:11px;color:#ddd">x1</div>
<div class="a" style="left:772px;top:584px;font-size:8.5px;color:#fff;font-family:'Liberation Serif',serif;font-weight:bold;letter-spacing:0.6px">XY</div>
<div class="a" style="left:794px;top:582px;font-size:10.5px;color:#fff;white-space:nowrap;letter-spacing:0.3px">867,&nbsp;&nbsp; -12</div>
<div class="mb" style="left:893px;top:578px;width:47px;height:20px"></div><div class="a" style="left:893px;top:582px;width:47px;text-align:center;font-size:10px;color:#ccc">RGBA</div>
<div class="nan" style="left:951px;color:#d82020">NAN</div>
<div class="nan" style="left:1031px;color:#3cb030">NAN</div>
<div class="nan" style="left:1111px;color:#8a9cc8">NAN</div>
<div class="nan" style="left:1191px;color:#f0f0f0">NAN</div>
<div class="mb" style="left:1267px;top:578px;width:29px;height:20px"></div><div class="a" style="left:1267px;top:579px;width:29px;text-align:center;font-size:15px;color:#ccc">C</div>
<div class="mb" style="left:1332px;top:578px;width:37px;height:20px"></div><div class="a" style="left:1332px;top:582px;width:37px;text-align:center;font-size:10px;color:#ccc">HSV</div>
<div class="nan" style="left:1379px;color:#e8e820">NAN</div>
<div class="nan" style="left:1459px;color:#e8e820">NAN</div>
<div class="nan" style="left:1539px;color:#e8e820">NAN</div>
<div class="mb" style="left:1614px;top:578px;width:24px;height:20px"></div><div class="a" style="left:1614px;top:580px;width:24px;text-align:center;font-size:14px;color:#ccc">Y</div>
<div class="nan" style="left:1648px;color:#f0f0f0">NAN</div>
<!-- timeline panel -->
<div class="a" style="left:708px;top:603px;width:1024px;height:49px;background:#555;border:1px solid #888;border-top:1px solid #777;border-bottom:1px solid #2a2a2a"></div>
<div class="a" style="left:716px;top:606px;width:975px;height:21px;background:#666;border:1px solid #444;border-radius:8px 0 0 8px"></div>
<div class="a" style="left:743px;top:616px;width:465px;height:9px;background:#009400"></div>
<div class="tk" style="left:726.9px;top:611px;height:14px"></div>
<div class="tk" style="left:746.6px;top:611px;height:14px"></div>
<div class="tk" style="left:766.2px;top:611px;height:14px"></div>
<div class="tk" style="left:785.8px;top:611px;height:14px"></div>
<div class="tk" style="left:805.5px;top:608px;height:17px"></div>
<div class="tk" style="left:825.1px;top:611px;height:14px"></div>
<div class="tk" style="left:844.8px;top:611px;height:14px"></div>
<div class="tk" style="left:864.4px;top:611px;height:14px"></div>
<div class="tk" style="left:884.0px;top:611px;height:14px"></div>
<div class="tk" style="left:903.7px;top:608px;height:17px"></div>
<div class="tk" style="left:923.3px;top:611px;height:14px"></div>
<div class="tk" style="left:943.0px;top:611px;height:14px"></div>
<div class="tk" style="left:962.6px;top:611px;height:14px"></div>
<div class="tk" style="left:982.2px;top:611px;height:14px"></div>
<div class="tk" style="left:1001.9px;top:608px;height:17px"></div>
<div class="tk" style="left:1021.5px;top:611px;height:14px"></div>
<div class="tk" style="left:1041.2px;top:611px;height:14px"></div>
<div class="tk" style="left:1060.8px;top:611px;height:14px"></div>
<div class="tk" style="left:1080.4px;top:611px;height:14px"></div>
<div class="tk" style="left:1100.1px;top:608px;height:17px"></div>
<div class="tk" style="left:1119.7px;top:611px;height:14px"></div>
<div class="tk" style="left:1139.4px;top:611px;height:14px"></div>
<div class="tk" style="left:1159.0px;top:611px;height:14px"></div>
<div class="tk" style="left:1178.6px;top:611px;height:14px"></div>
<div class="tk" style="left:1198.3px;top:608px;height:17px"></div>
<div class="tk" style="left:1217.9px;top:611px;height:14px"></div>
<div class="tk" style="left:1237.6px;top:611px;height:14px"></div>
<div class="tk" style="left:1257.2px;top:611px;height:14px"></div>
<div class="tk" style="left:1276.8px;top:611px;height:14px"></div>
<div class="tk" style="left:1296.5px;top:608px;height:17px"></div>
<div class="tk" style="left:1316.1px;top:611px;height:14px"></div>
<div class="tk" style="left:1335.8px;top:611px;height:14px"></div>
<div class="tk" style="left:1355.4px;top:611px;height:14px"></div>
<div class="tk" style="left:1375.0px;top:611px;height:14px"></div>
<div class="tk" style="left:1394.7px;top:608px;height:17px"></div>
<div class="tk" style="left:1414.3px;top:611px;height:14px"></div>
<div class="tk" style="left:1434.0px;top:611px;height:14px"></div>
<div class="tk" style="left:1453.6px;top:611px;height:14px"></div>
<div class="tk" style="left:1473.2px;top:611px;height:14px"></div>
<div class="tk" style="left:1492.9px;top:608px;height:17px"></div>
<div class="tk" style="left:1512.5px;top:611px;height:14px"></div>
<div class="tk" style="left:1532.2px;top:611px;height:14px"></div>
<div class="tk" style="left:1551.8px;top:611px;height:14px"></div>
<div class="tk" style="left:1571.4px;top:611px;height:14px"></div>
<div class="tk" style="left:1591.1px;top:608px;height:17px"></div>
<div class="tk" style="left:1610.7px;top:611px;height:14px"></div>
<div class="tk" style="left:1630.4px;top:611px;height:14px"></div>
<div class="tk" style="left:1650.0px;top:611px;height:14px"></div>
<div class="tk" style="left:1669.6px;top:611px;height:14px"></div>
<div class="a" style="left:716px;top:606px;width:974px;height:21px;overflow:hidden"><div class="a" style="left:128.4px;top:2px;width:40px;text-align:center;font-size:14px;color:#c4c4c4">16</div><div class="a" style="left:265.9px;top:2px;width:40px;text-align:center;font-size:14px;color:#c4c4c4">30</div><div class="a" style="left:403.4px;top:2px;width:40px;text-align:center;font-size:14px;color:#c4c4c4">44</div><div class="a" style="left:540.8px;top:2px;width:40px;text-align:center;font-size:14px;color:#c4c4c4">58</div><div class="a" style="left:678.3px;top:2px;width:40px;text-align:center;font-size:14px;color:#c4c4c4">72</div><div class="a" style="left:815.8px;top:2px;width:40px;text-align:center;font-size:14px;color:#c4c4c4">86</div><div class="a" style="left:953.3px;top:2px;width:40px;text-align:center;font-size:14px;color:#c4c4c4">100</div></div>
<div class="a" style="left:734px;top:608px;width:10px;height:17px;background:#6a6a5a;border:1px solid #4a4a40;border-radius:3px"></div>
<div class="mb" style="left:1692px;top:606px;width:32px;height:21px"></div><div class="a mt" style="left:1692px;top:608px;width:32px">L</div>
<div class="a" style="left:1689px;top:606px;width:1px;height:21px;background:#111"></div>
<div class="mb" style="left:715px;top:631px;width:30px;height:18px"></div><div class="a mt" style="left:715px;top:632px;width:30px;font-size:15px">C:</div>
<div class="inp" style="left:745px;top:631px;width:111px;height:18px"></div><div class="a" style="left:748px;top:632px;font-size:14px;color:#111">3</div>
<div class="mb" style="left:864.5px;top:631px;width:47px;height:18px"></div><svg class="a" style="left:879.0px;top:631px" width="18" height="18" viewBox="0 0 18 18"><g fill="#a8a8a8"><rect x="6" y="4" width="2" height="10"/><path d="M8 9 L15 4 V14 Z"/></g></svg>
<div class="mb" style="left:912.5px;top:631px;width:47px;height:18px"></div><svg class="a" style="left:927.0px;top:631px" width="18" height="18" viewBox="0 0 18 18"><g fill="#a8a8a8"><path d="M6 9 L11 4.5 V13.5 Z"/></g></svg>
<div class="mb" style="left:960.5px;top:631px;width:47px;height:18px"></div><svg class="a" style="left:975.0px;top:631px" width="18" height="18" viewBox="0 0 18 18"><g fill="#a8a8a8"><path d="M4 9 L10 4.5 V13.5 Z"/><rect x="12" y="4.5" width="2" height="9"/></g></svg>
<div class="mb" style="left:1008.5px;top:631px;width:47px;height:18px"></div><svg class="a" style="left:1023.0px;top:631px" width="18" height="18" viewBox="0 0 18 18"><g fill="#b8b8b8"><rect x="5" y="4" width="3" height="10"/><rect x="10" y="4" width="3" height="10"/></g></svg>
<div class="mb" style="left:1056.5px;top:631px;width:47px;height:18px"></div><svg class="a" style="left:1071.0px;top:631px" width="18" height="18" viewBox="0 0 18 18"><g fill="#a8a8a8"><rect x="4" y="4.5" width="2" height="9"/><path d="M8 4.5 L14 9 L8 13.5 Z"/></g></svg>
<div class="mb" style="left:1104.5px;top:631px;width:47px;height:18px"></div><svg class="a" style="left:1119.0px;top:631px" width="18" height="18" viewBox="0 0 18 18"><g fill="#a8a8a8"><path d="M7 4.5 L12 9 L7 13.5 Z"/></g></svg>
<div class="mb" style="left:1152.5px;top:631px;width:47px;height:18px"></div><svg class="a" style="left:1167.0px;top:631px" width="18" height="18" viewBox="0 0 18 18"><g fill="#a8a8a8"><path d="M3 4 L10 9 L3 14 Z"/><rect x="10" y="4" width="2" height="10"/></g></svg>
<div class="mb" style="left:1213px;top:631px;width:47px;height:18px"></div><div class="a" style="left:1213px;top:634px;width:47px;text-align:center;font-size:11px;color:#ccc">CPS</div>
<div class="inp" style="left:1259px;top:631px;width:54px;height:18px"></div><div class="a" style="left:1261px;top:632px;font-size:14px;color:#111">24</div>
<div class="mb" style="left:1320px;top:631px;width:27px;height:18px"></div><div class="a" style="left:1320px;top:634px;width:27px;text-align:center;font-size:11px;color:#ccc">A</div>
<div class="mb" style="left:1348px;top:631px;width:88px;height:18px;border-radius:8px"></div>
<div class="a" style="left:1408px;top:634px;width:26px;height:11px;background:#5a5a5a;border:1px solid #3a3a3a;border-radius:5px"></div>
<div class="mb" style="left:1438px;top:631px;width:31px;height:18px"></div><div class="a mt" style="left:1438px;top:632px;width:31px;font-size:15px">S</div>
<div class="inp" style="left:1468px;top:631px;width:111px;height:18px"></div><div class="a" style="left:1471px;top:632px;font-size:14px;color:#111">1</div>
<div class="mb" style="left:1582px;top:631px;width:30px;height:18px"></div><div class="a mt" style="left:1582px;top:632px;width:30px;font-size:15px">E</div>
<div class="inp" style="left:1612px;top:631px;width:111px;height:18px"></div><div class="a" style="left:1615px;top:632px;font-size:14px;color:#111">100</div>


</body></html>
